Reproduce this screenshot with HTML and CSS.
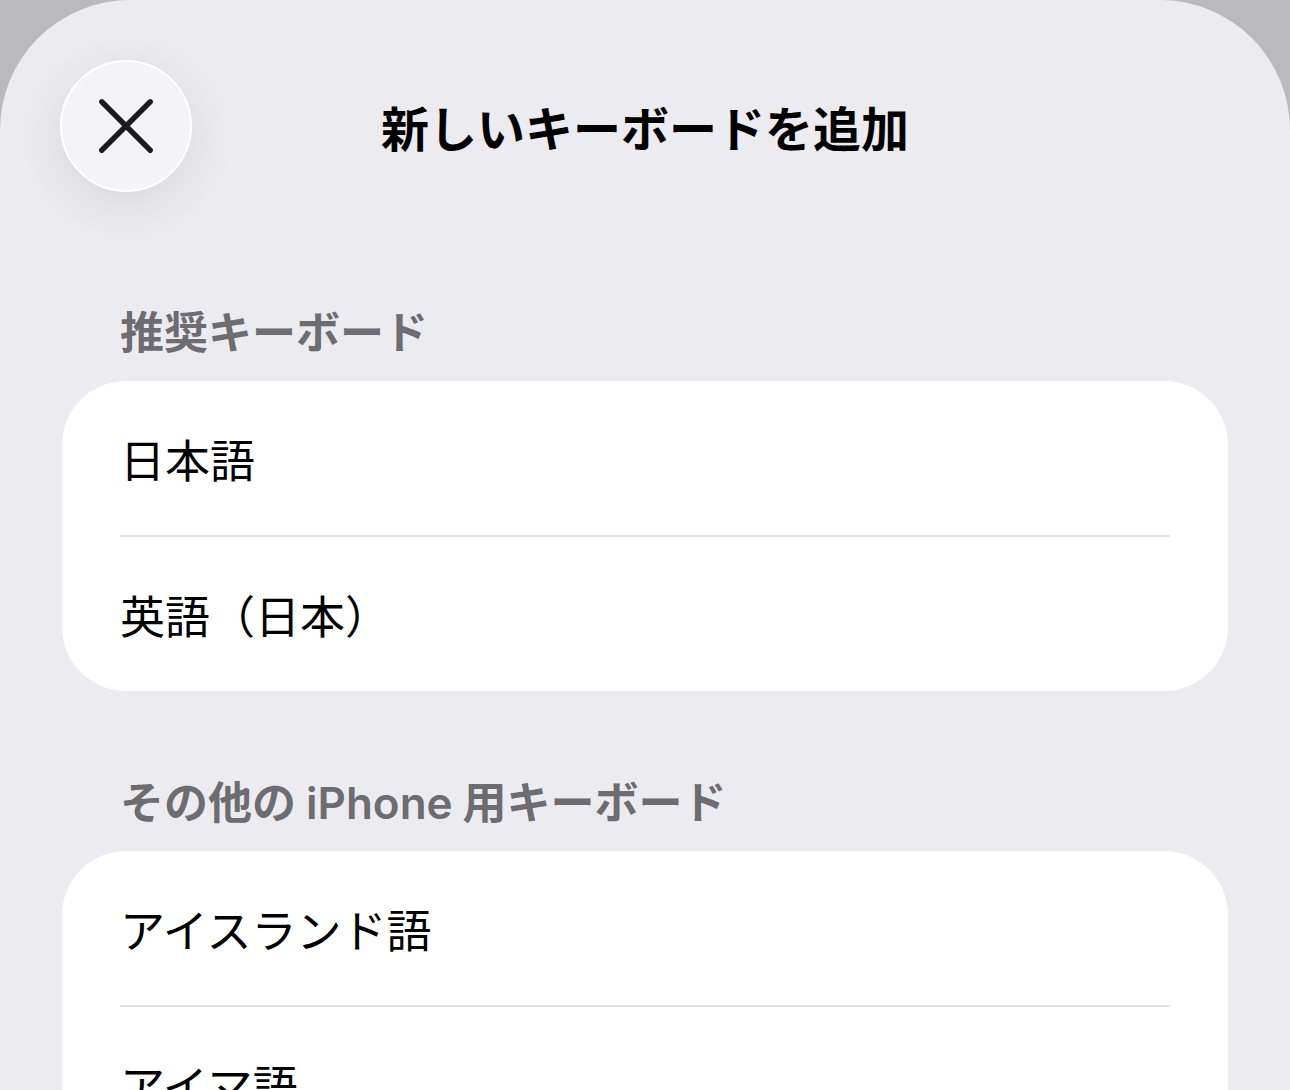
FILE: index.html
```html
<!DOCTYPE html>
<html lang="ja">
<head>
    <meta charset="UTF-8">
    <meta name="viewport" content="width=device-width, initial-scale=1.0">
    <title>新しいキーボードを追加</title>
    <link rel="stylesheet" href="styles.css">
</head>
<body>
    <div class="sheet">
        <header class="sheet-header">
            <button class="close-btn" aria-label="閉じる">
                <svg width="132" height="132" viewBox="0 0 132 132">
                    <path d="M41 41 L91 91 M91 41 L41 91" stroke="#1c1c1e" stroke-width="5.5" stroke-linecap="round" fill="none"/>
                </svg>
            </button>
            <h1 class="sheet-title">新しいキーボードを追加</h1>
            <div></div>
        </header>

        <section class="group first">
            <h2 class="group-title">推奨キーボード</h2>
            <div class="card">
                <div class="row">日本語</div>
                <div class="divider"></div>
                <div class="row">英語（日本）</div>
            </div>
        </section>

        <section class="group">
            <h2 class="group-title">その他の<span class="latin">iPhone</span>用キーボード</h2>
            <div class="card">
                <div class="row">アイスランド語</div>
                <div class="divider"></div>
                <div class="row">アイマ語</div>
            </div>
        </section>
    </div>
</body>
</html>
```

FILE: styles.css
```css
body {
    margin: 0;
    background-color: #b9b9be;
    font-family: 'Inter', 'Noto Sans CJK JP', sans-serif;
    color: #000000;
    overflow: hidden;
}

.sheet {
    background-color: #ebebf0;
    border-radius: 130px 130px 0 0;
    min-height: 100vh;
    padding: 60px 62px 0;
    box-sizing: border-box;
}

.sheet-header {
    display: grid;
    grid-template-columns: 1fr auto 1fr;
    align-items: center;
    height: 132px;
}

.close-btn {
    width: 132px;
    height: 132px;
    margin-left: -2px;
    padding: 0;
    border: 2px solid #ffffff;
    border-radius: 50%;
    background-color: #f4f4f6;
    box-shadow: 0 12px 50px rgba(0, 0, 0, 0.09);
    display: flex;
    align-items: center;
    justify-content: center;
    cursor: pointer;
}

    .close-btn svg {
        display: block;
    }

.sheet-title {
    margin: 0;
    font-family: 'Noto Sans CJK JP', sans-serif;
    font-size: 48px;
    font-weight: 700;
    line-height: 56px;
}

.group {
    margin-top: 84px;
}

    .group.first {
        margin-top: 113px;
    }

.group-title {
    margin: 0 0 20px;
    padding-left: 58px;
    font-size: 44px;
    font-weight: 700;
    line-height: 56px;
    color: #6c6c71;
}

.latin {
    margin: 0 10px;
    font-weight: 600;
}

.card {
    background-color: #ffffff;
    border-radius: 64px;
    overflow: hidden;
}

.row {
    height: 154px;
    display: flex;
    align-items: center;
    padding-left: 58px;
    font-family: 'Noto Sans CJK JP', sans-serif;
    font-size: 45px;
}

.divider {
    height: 2px;
    margin: 0 58px;
    background-color: #e4e4e7;
}
```
